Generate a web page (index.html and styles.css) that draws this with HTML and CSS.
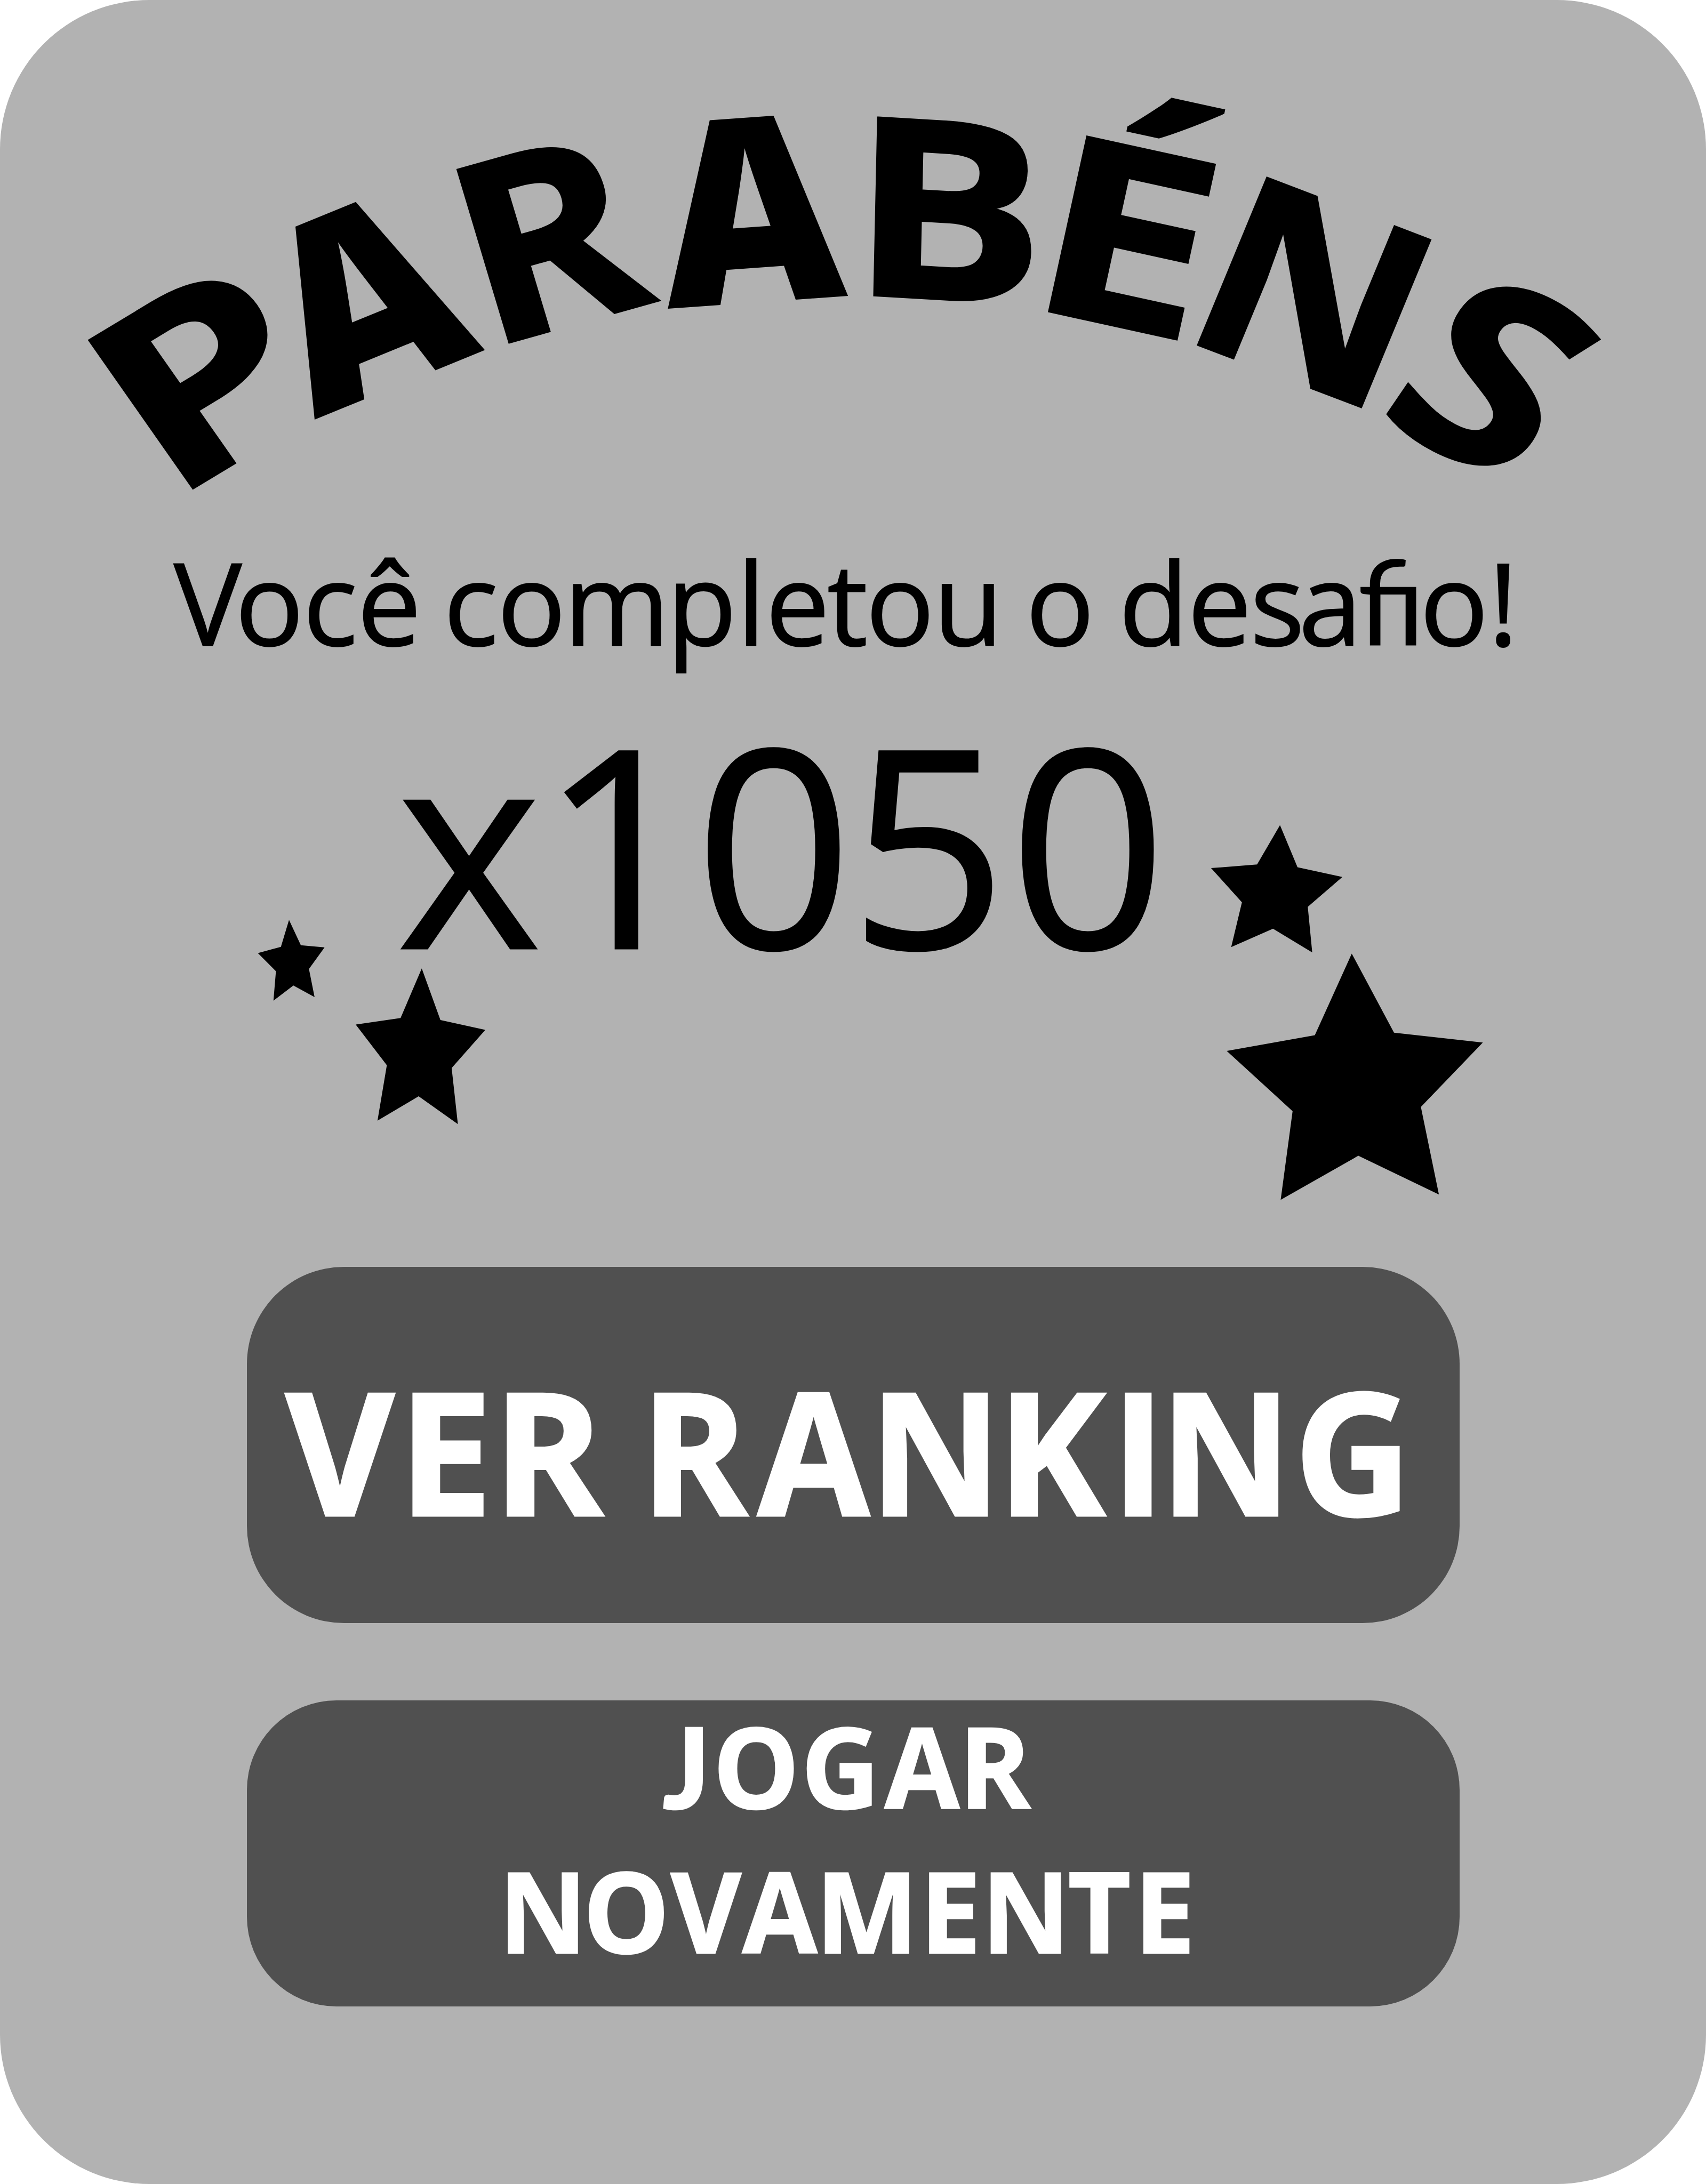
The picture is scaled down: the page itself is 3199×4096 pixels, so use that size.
FILE: index.html
```html
<!DOCTYPE html>
<html lang="pt-BR">
<head>
<meta charset="utf-8">
<title>Parabéns</title>
<link rel="stylesheet" href="styles.css">
</head>
<body>
<main class="card">
  <h1 class="title">
    <svg class="art" viewBox="0 0 3492 1080" role="img" aria-label="PARABÉNS">
      <g class="arch">
        <text transform="matrix(.555 -.335 .297 .4237 346 1029)">P</text>
        <text class="wide" transform="matrix(.48 -.196 .2108 .4874 644 859)">A</text>
        <text transform="matrix(.535 -.15 .148 .494 995 714)">R</text>
        <text class="wide" transform="matrix(.508 -.036 .0455 .5266 1367 632)">A</text>
        <text transform="matrix(.595 .035 -.011 .5085 1737 601)">B</text>
        <text transform="matrix(.63 .138 -.109 .5 2092 625)">É</text>
        <text transform="matrix(.525 .2 -.1975 .478 2406 688)">N</text>
        <text transform="matrix(.525 .272 -.296 .436 2807 850)">S</text>
      </g>
    </svg>
  </h1>
  <p class="message">
    <svg class="art" viewBox="0 1080 3492 360">
      <g class="line">
        <text y="1322" x="355.5 481 620 731">Você</text>
        <text y="1322" x="908 1017.5 1154 1365 1508 1567 1693 1772 1910">completou</text>
        <text y="1322" x="2099.5">o</text>
        <text y="1322" x="2290 2430.6 2559 2658">desa<tspan class="ligature" x="2779">fi</tspan><tspan x="2906 3046">o!</tspan></text>
      </g>
    </svg>
  </p>
  <section class="score">
    <svg class="art" viewBox="0 1440 3492 1154">
      <text class="points" y="1942" x="812 1106 1422 1738 2065">x1050</text>
      <g class="stars">
        <polygon points="591.6,1883.5 615.8,1935.2 664.3,1939.8 632.4,1984 643.9,2041.4 600.5,2017.8 559.7,2048.8 564.8,1988.6 527.8,1951.3 575,1938.6"/>
        <polygon points="863.3,1982.8 901.5,2088.4 993.4,2108.5 924.5,2186.6 937.2,2301.4 856.9,2244.6 772.7,2294.5 791.8,2180.9 728.1,2097.6 819.9,2084.4"/>
        <polygon points="2620,1689.5 2655.9,1775.6 2747.7,1795.7 2676.9,1856.6 2686,1950.1 2605.7,1901.4 2520.1,1939.2 2542.1,1847.4 2478.9,1777.4 2573.1,1769.9"/>
        <polygon points="2766.9,1952.4 2853.4,2114.3 3035.2,2134.4 2908.4,2266.4 2945.3,2445.5 2780.3,2366.3 2621.4,2456.4 2645.8,2275 2511,2151.6 2691.3,2119.5"/>
      </g>
    </svg>
  </section>
  <div class="actions">
    <button class="button ranking" type="button">
      <svg class="art" viewBox="505 2594 2482 729">
        <g class="label large">
          <text transform="scale(.98 1)" y="3103" x="596 832 1029">VER</text>
          <text transform="scale(.95 1)" y="3103" x="1380 1632 1873 2149 2394 2499 2788">RANKING</text>
        </g>
      </svg>
    </button>
    <button class="button replay" type="button">
      <svg class="art" viewBox="505 3481 2482 626">
        <g class="label small" transform="scale(.97 1)">
          <text y="3702" x="1398"><tspan class="hook">J</tspan><tspan x="1504 1690 1866 2023">OGAR</tspan></text>
          <text y="3997.8" x="1052 1230 1415 1566 1721 1941 2071 2253 2393">NOVAMENTE</text>
        </g>
      </svg>
    </button>
  </div>
</main>
</body>
</html>
```
FILE: styles.css
```css
html, body {
  margin: 0;
  background: #fff;
}

.card {
  box-sizing: border-box;
  width: 3199px;
  height: 4096px;
  overflow: hidden;
  border-radius: 280px;
  background: #b2b2b2;
  color: #000;
  font-family: "Open Sans", "Noto Sans", sans-serif;
  display: flex;
  flex-direction: column;
}

.title, .message {
  margin: 0;
}

.title {
  height: 989.4px;
}

.message {
  height: 329.8px;
}

.score {
  height: 1057.2px;
}

.art {
  display: block;
  width: 100%;
  height: 100%;
  overflow: visible;
  fill: currentColor;
}

.arch {
  font-size: 1000px;
  font-weight: 700;
  stroke: currentColor;
  stroke-width: 10px;
}

.wide {
  font-weight: 800;
  stroke: none;
}

.line {
  font-size: 234px;
  font-weight: 400;
  stroke: currentColor;
  stroke-width: 2px;
}

.ligature {
  font-family: Lato, sans-serif;
  font-size: 241px;
  stroke: none;
}

.points {
  font-size: 566px;
  font-weight: 400;
  stroke: currentColor;
  stroke-width: 3.5px;
}

.actions {
  display: flex;
  flex-direction: column;
  align-items: center;
  gap: 145px;
}

.button {
  width: 2274px;
  padding: 0;
  border: 0;
  background: #505050;
  color: #fff;
  font-family: inherit;
}

.ranking {
  height: 667.8px;
  border-radius: 182px;
}

.replay {
  height: 573.8px;
  border-radius: 168px;
}

.label {
  font-weight: 700;
  stroke: currentColor;
}

.large {
  font-size: 349px;
  stroke-width: 5px;
}

.small {
  font-size: 229px;
  stroke-width: 3px;
}

.hook {
  font-family: Lato, sans-serif;
  font-weight: 900;
}
```
